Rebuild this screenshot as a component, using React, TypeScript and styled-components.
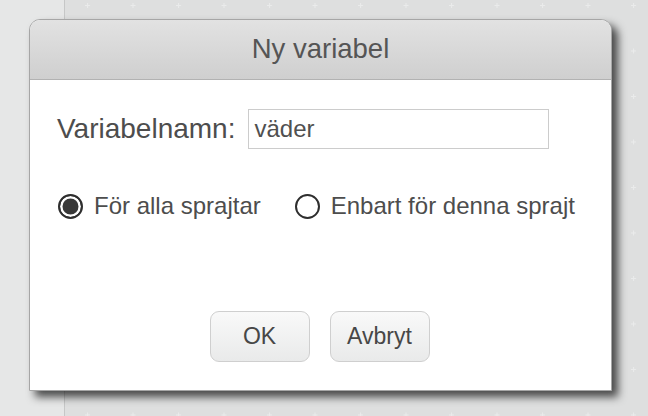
import React from "react";
import styled, { createGlobalStyle } from "styled-components";

const Global = createGlobalStyle`
  html, body { margin: 0; padding: 0; }
  body { font-family: "Liberation Sans", Arial, sans-serif; }
`;

const Page = styled.div`
  position: relative;
  width: 648px;
  height: 416px;
  display: flex;
  overflow: hidden;
  background: #dedfdf;
`;

const LeftStrip = styled.div`
  width: 64px;
  flex: none;
  background: #e6e7e7;
  border-right: 1px solid #c6c7c7;
`;

const Canvas = styled.div`
  position: relative;
  flex: 1;
  background: #dedfdf;
`;

const GridSvg = styled.svg`
  position: absolute;
  inset: 0;
  width: 100%;
  height: 100%;
`;

const Dialog = styled.div`
  position: absolute;
  left: 29px;
  top: 19px;
  width: 583px;
  height: 372px;
  box-sizing: border-box;
  display: flex;
  flex-direction: column;
  background: #ffffff;
  border: 1px solid #a6a6a6;
  border-radius: 11px 11px 0 0;
  box-shadow: 6px 6px 8px rgba(0, 0, 0, 0.68);
`;

const Header = styled.div`
  height: 59px;
  flex: none;
  display: flex;
  align-items: center;
  justify-content: center;
  border-bottom: 1px solid #b2b2b2;
  border-radius: 10px 10px 0 0;
  background: linear-gradient(#e2e2e2, #cfcfcf);
`;

const Title = styled.div`
  font-size: 27.5px;
  color: #555555;
  padding-bottom: 2px;
`;

const Body = styled.div`
  flex: 1;
  display: flex;
  flex-direction: column;
  padding: 29px 27px 27px 27px;
`;

const NameRow = styled.div`
  display: flex;
  align-items: center;
  gap: 13px;
`;

const Label = styled.label`
  font-size: 28px;
  color: #4d4d4d;
`;

const Input = styled.input`
  box-sizing: border-box;
  width: 301px;
  height: 40px;
  border: 1px solid #cccccc;
  padding: 0 0 0 5px;
  font-family: "Liberation Sans", Arial, sans-serif;
  font-size: 24px;
  color: #505050;
  outline: none;
  background: #fff;
`;

const RadioRow = styled.div`
  display: flex;
  align-items: center;
  gap: 34px;
  margin-top: 43px;
  padding-left: 1px;
`;

const RadioOption = styled.label`
  display: flex;
  align-items: center;
  gap: 11px;
  font-size: 24px;
  color: #4d4d4d;
`;

const RadioCircle = styled.span<{ $checked?: boolean }>`
  box-sizing: border-box;
  width: 25px;
  height: 25px;
  border-radius: 50%;
  border: 2.5px solid #2e2e2e;
  background: ${(p) => (p.$checked ? "#383838" : "#ffffff")};
  box-shadow: ${(p) => (p.$checked ? "inset 0 0 0 2.5px #ffffff" : "none")};
  flex: none;
`;

const Buttons = styled.div`
  margin-top: auto;
  display: flex;
  justify-content: center;
  gap: 20px;
  padding-right: 2px;
`;

const Button = styled.button`
  box-sizing: border-box;
  width: 100px;
  height: 51px;
  margin-bottom: 1px;
  border: 1px solid #cfcfcf;
  border-radius: 9px;
  background: linear-gradient(#f9f9f9, #e9eaea);
  font-family: "Liberation Sans", Arial, sans-serif;
  font-size: 23px;
  color: #474747;
  padding: 0;
`;

export default function App() {
  return (
    <>
      <Global />
      <Page>
        <LeftStrip />
        <Canvas>
          <GridSvg>
            <defs>
              <pattern
                id="plus"
                x="20"
                y="3"
                width="45.5"
                height="45.5"
                patternUnits="userSpaceOnUse"
              >
                <path d="M0 2.5 H5 M2.5 0 V5" stroke="#eaebeb" strokeWidth="1" />
              </pattern>
            </defs>
            <rect width="100%" height="100%" fill="url(#plus)" />
          </GridSvg>
        </Canvas>
        <Dialog>
          <Header>
            <Title>Ny variabel</Title>
          </Header>
          <Body>
            <NameRow>
              <Label>Variabelnamn:</Label>
              <Input defaultValue="väder" />
            </NameRow>
            <RadioRow>
              <RadioOption>
                <RadioCircle $checked />
                För alla sprajtar
              </RadioOption>
              <RadioOption>
                <RadioCircle />
                Enbart för denna sprajt
              </RadioOption>
            </RadioRow>
            <Buttons>
              <Button>OK</Button>
              <Button>Avbryt</Button>
            </Buttons>
          </Body>
        </Dialog>
      </Page>
    </>
  );
}
